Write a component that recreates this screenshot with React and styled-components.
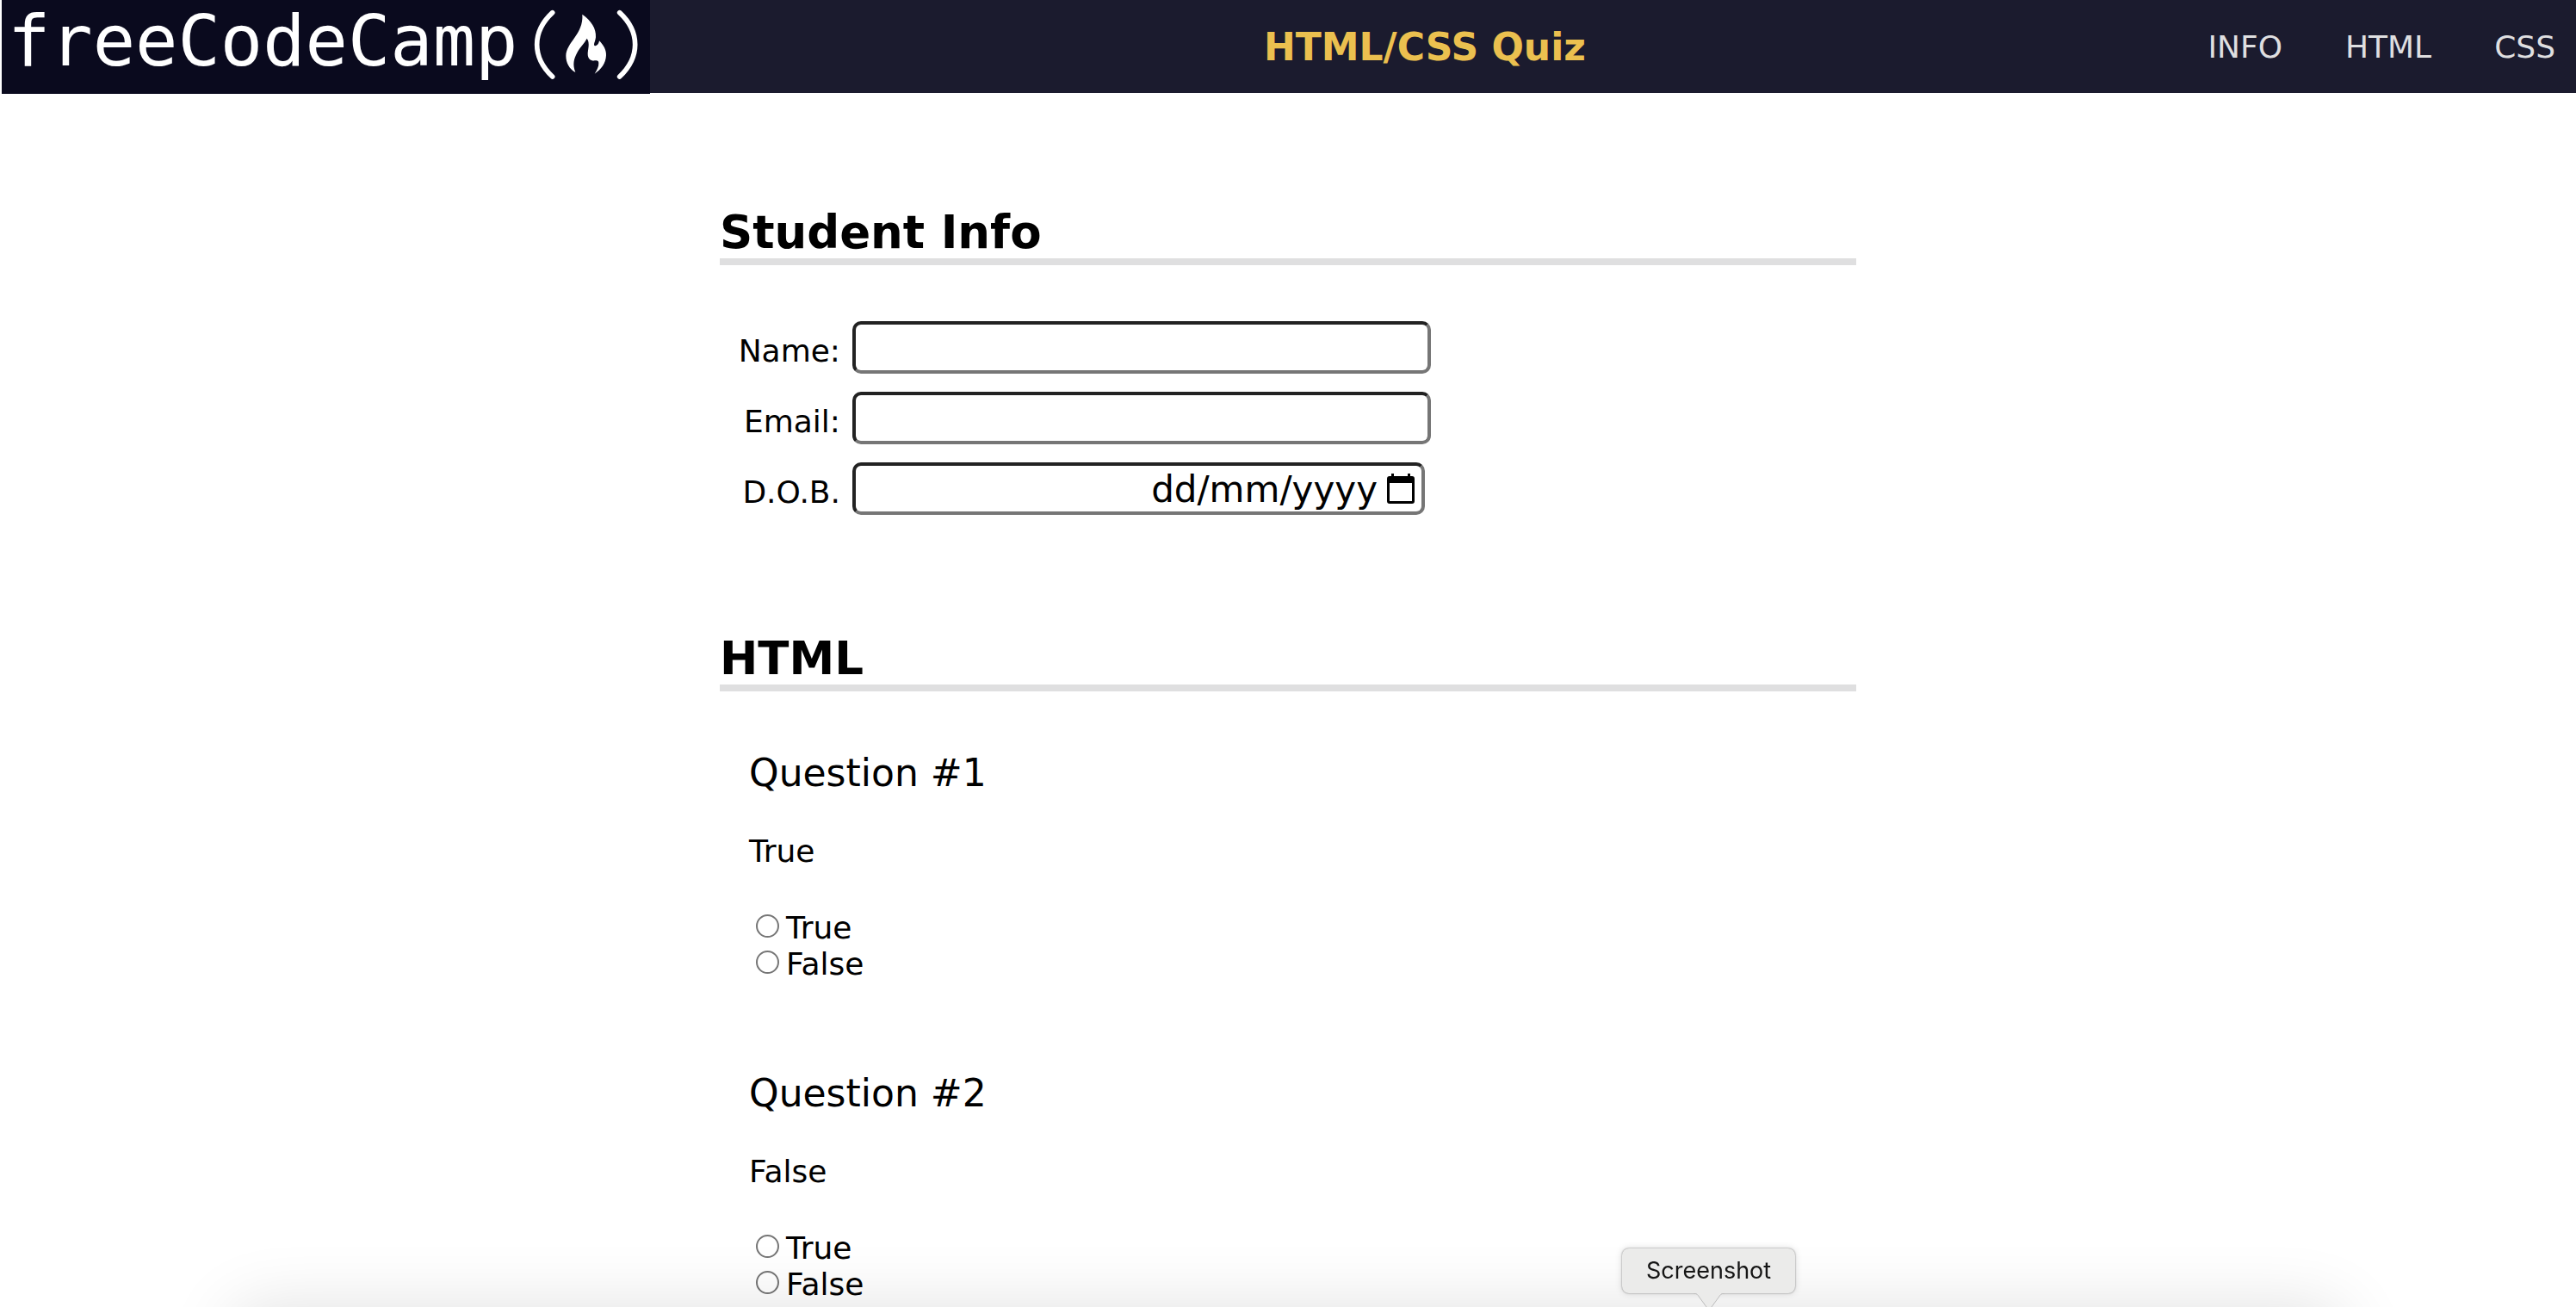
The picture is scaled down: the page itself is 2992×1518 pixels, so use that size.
import React from "react";
import styled, { createGlobalStyle } from "styled-components";

const GlobalStyle = createGlobalStyle`
  *, *::before, *::after { box-sizing: border-box; }
  body {
    margin: 0;
    background: #fff;
    color: #000;
    font-family: Verdana, "DejaVu Sans", sans-serif;
    font-size: 36px;
  }
`;

const Header = styled.header`
  display: flex;
  justify-content: space-between;
  align-items: center;
  height: 108px;
  margin-left: 2px;
  padding-top: 2px;
  background: #1b1b2e;
`;

const Logo = styled.a`
  display: flex;
  align-self: flex-start;
  align-items: flex-start;
  gap: 15px;
  height: 109px;
  margin-top: -2px;
  padding: 0 9px 0 7px;
  background: #0a0a1e;
  color: #fff;
  text-decoration: none;
`;

const LogoName = styled.span`
  font-family: "DejaVu Sans Mono", monospace;
  font-size: 82px;
  line-height: 95px;
`;

const Title = styled.h1`
  margin: 0;
  color: #ebc04f;
  font-size: 44px;
  line-height: 56px;
`;

const NavList = styled.ul`
  display: flex;
  gap: 73px;
  margin: 0;
  padding: 0 24px 0 10px;
  list-style: none;
`;

const NavLink = styled.a`
  color: #dfdfe0;
  line-height: 42px;
  text-decoration: none;
`;

const Main = styled.main`
  max-width: 1320px;
  margin: 0 auto;
  padding-top: 132px;
`;

const Section = styled.section`
  margin-bottom: ${(p) => (p.$last ? 0 : 137)}px;
`;

const SectionTitle = styled.h2`
  margin: 0 0 ${(p) => p.$space}px;
  border-bottom: 8px solid #dfdfe0;
  font-size: 53px;
  line-height: 60px;
`;

const Fields = styled.div`
  display: flex;
  flex-direction: column;
  gap: 21px;
`;

const Field = styled.div`
  display: flex;
  gap: 14px;
`;

const FieldLabel = styled.label`
  width: 140px;
  padding-top: 14px;
  line-height: 42px;
  text-align: right;
`;

const boxBorder = `
  height: 61px;
  border: 4px solid;
  border-color: #222 #767676 #767676 #222;
  border-radius: 10px;
  background: #fff;
`;

const TextInput = styled.input`
  ${boxBorder}
  width: 672px;
  padding: 0 8px;
  font: inherit;
`;

const DateBox = styled.div`
  ${boxBorder}
  display: flex;
  align-items: center;
  gap: 11px;
  width: 665px;
  padding-right: 8px;
`;

const DateInput = styled.input`
  flex: 1;
  min-width: 0;
  padding: 2px 0 0;
  border: 0;
  background: none;
  font-family: inherit;
  font-size: 42px;
  line-height: 50px;
  text-align: right;
  &::placeholder { color: #000; opacity: 1; }
`;

const DateButton = styled.button`
  display: flex;
  padding: 0;
  border: 0;
  background: none;
`;

const Questions = styled.div`
  display: flex;
  flex-direction: column;
  gap: 102px;
  padding-left: 34px;
`;

const QuestionTitle = styled.h3`
  margin: 0 0 42px;
  font-size: 44px;
  font-weight: 400;
  line-height: 54px;
`;

const Prompt = styled.legend`
  margin-bottom: 46px;
  padding: 0;
  line-height: 44px;
`;

const Answers = styled.fieldset`
  margin: 0;
  padding: 0;
  border: 0;
`;

const Option = styled.label`
  display: flex;
  gap: 8px;
  padding-left: 8px;
  line-height: 42px;
`;

const Radio = styled.input`
  appearance: none;
  width: 27px;
  height: 27px;
  margin: 5px 0 0;
  border: 2px solid #767676;
  border-radius: 50%;
  background: #fff;
  &:checked { background: radial-gradient(#0075ff 50%, #fff 56%); border-color: #0075ff; }
`;

const DockShadow = styled.div`
  position: fixed;
  top: 100%;
  left: 9%;
  right: 9%;
  height: 100px;
  border-radius: 30px;
  box-shadow: 0 0 80px rgba(0, 0, 0, 0.12);
  pointer-events: none;
`;

const Tooltip = styled.div`
  position: fixed;
  left: 1884px;
  bottom: 16px;
  padding: 9px 28px;
  border-radius: 8px;
  background: #ebebea;
  color: #161616;
  box-shadow: 0 0 2px rgba(0, 0, 0, 0.5), 0 0 8px rgba(0, 0, 0, 0.15);
  font-family: Inter, sans-serif;
  font-size: 27px;
  line-height: 34px;
`;

const TooltipArrow = styled.svg`
  position: absolute;
  top: 100%;
  left: 50%;
  margin-left: -18px;
`;

const links = ["INFO", "HTML", "CSS"];

const questions = [
  { id: "q1", title: "Question #1", prompt: "True" },
  { id: "q2", title: "Question #2", prompt: "False" },
];

function Flame() {
  return (
    <svg width="130" height="109" viewBox="650 0 390 327" aria-hidden="true">
      <g fill="none" stroke="#fff" strokeWidth="17" strokeLinecap="round">
        <path d="M727 44C655 111 655 199 727 267" />
        <path d="M961 44C1033 111 1033 199 961 267" />
      </g>
      <path
        fill="#fff"
        d="M831 50C862 72 880 99 878 130C877 141 872 150 872 155C872 163 887 161 890 142C904 156 915 173 914 193C913 220 897 242 874 257C882 244 889 232 888 220C888 211 883 210 876 211C861 213 850 205 850 188C850 172 859 150 847 134C838 151 826 161 815 180C800 206 797 226 807 252C786 240 774 219 774 194C775 147 836 119 831 50Z"
      />
    </svg>
  );
}

function CalendarIcon() {
  return (
    <svg width="32" height="36" viewBox="0 0 32 36" aria-hidden="true">
      <path
        fillRule="evenodd"
        d="M5 0h3v3h16V0h3v3h2a3 3 0 0 1 3 3v26a3 3 0 0 1-3 3H3a3 3 0 0 1-3-3V6a3 3 0 0 1 3-3h2zM3 11v21h26V11z"
      />
    </svg>
  );
}

function Question({ id, title, prompt }) {
  return (
    <article>
      <QuestionTitle>{title}</QuestionTitle>
      <Answers>
        <Prompt>{prompt}</Prompt>
        {["True", "False"].map((answer) => (
          <Option key={answer} htmlFor={`${id}-${answer}`}>
            <Radio type="radio" id={`${id}-${answer}`} name={id} value={answer} />
            {answer}
          </Option>
        ))}
      </Answers>
    </article>
  );
}

export default function App() {
  return (
    <>
      <GlobalStyle />
      <Header>
        <Logo href="#top">
          <LogoName>freeCodeCamp</LogoName>
          <Flame />
        </Logo>
        <Title>HTML/CSS Quiz</Title>
        <nav>
          <NavList>
            {links.map((link) => (
              <li key={link}>
                <NavLink href={`#${link.toLowerCase()}`}>{link}</NavLink>
              </li>
            ))}
          </NavList>
        </nav>
      </Header>
      <Main>
        <Section id="info">
          <SectionTitle $space={65}>Student Info</SectionTitle>
          <Fields>
            <Field>
              <FieldLabel htmlFor="name">Name:</FieldLabel>
              <TextInput id="name" type="text" />
            </Field>
            <Field>
              <FieldLabel htmlFor="email">Email:</FieldLabel>
              <TextInput id="email" type="email" />
            </Field>
            <Field>
              <FieldLabel htmlFor="dob">D.O.B.</FieldLabel>
              <DateBox>
                <DateInput id="dob" type="text" placeholder="dd/mm/yyyy" />
                <DateButton type="button" aria-label="Open calendar">
                  <CalendarIcon />
                </DateButton>
              </DateBox>
            </Field>
          </Fields>
        </Section>
        <Section id="html" $last>
          <SectionTitle $space={68}>HTML</SectionTitle>
          <Questions>
            {questions.map((q) => (
              <Question key={q.id} {...q} />
            ))}
          </Questions>
        </Section>
      </Main>
      <DockShadow />
      <Tooltip role="tooltip">
        Screenshot
        <TooltipArrow width="36" height="24" viewBox="0 0 36 24" aria-hidden="true">
          <path fill="#ebebea" stroke="#bbb" d="M0 0C4 0 5 2 7 5L18 20L29 5C31 2 32 0 36 0" />
        </TooltipArrow>
      </Tooltip>
    </>
  );
}
